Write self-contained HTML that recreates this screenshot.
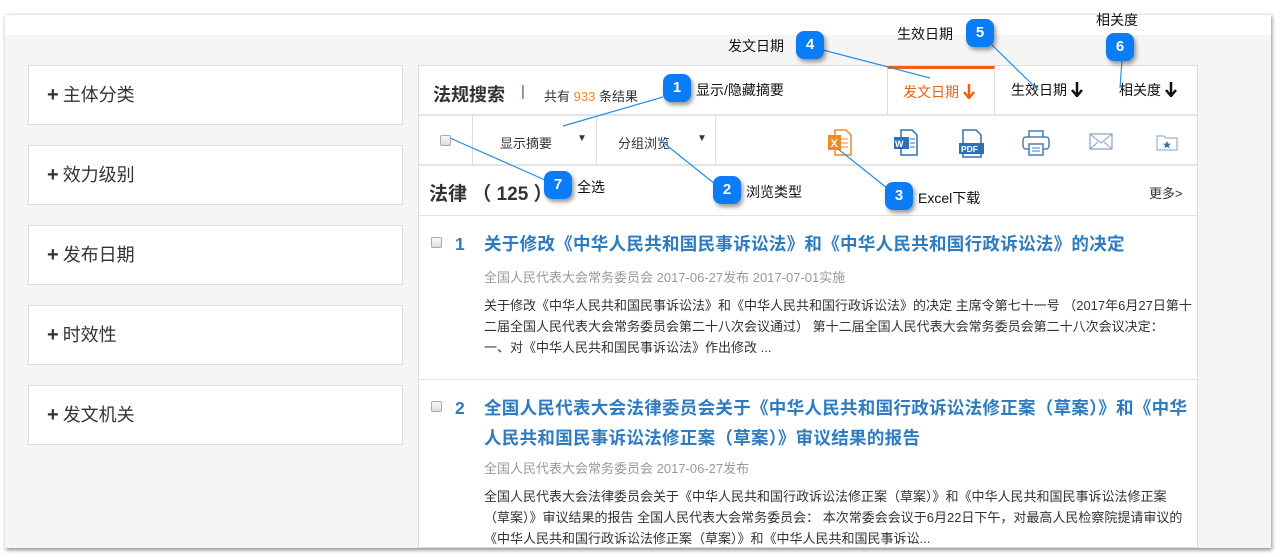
<!DOCTYPE html>
<html><head><meta charset="utf-8"><style>
*{margin:0;padding:0;box-sizing:border-box}
body{width:1280px;height:557px;background:#fff;position:relative;overflow:hidden;font-family:"Liberation Sans","Noto Sans CJK SC",sans-serif;color:#333}
.a{position:absolute}
#frame{left:5px;top:14px;width:1266px;height:534px;background:#f5f5f5;box-shadow:1px 2px 4px rgba(0,0,0,.45);border-top:1px solid #e8e8e8}
#topw{left:5px;top:15px;width:1266px;height:20px;background:#fff}
.lb{left:28px;width:375px;height:60px;background:#fff;border:1px solid #ddd;font-size:18px;line-height:58px;padding-left:18px;color:#333}
.lb b{font-size:20px;margin-right:4px}
#main{left:418px;top:65px;width:780px;height:483px;background:#fff;border:1px solid #ddd;overflow:hidden}
.hl{left:0;width:780px;height:2px;background:#e3e3e3}
.vl{width:1px;background:#ddd}
.badge{width:28px;height:28px;border-radius:8px;background:#0a7cf5;color:#fff;font-weight:bold;font-size:15px;text-align:center;line-height:28px;box-shadow:2px 3px 4px rgba(0,0,0,.4)}
.lab{font-size:14px;color:#111}
.t{color:#2f7bbf;font-weight:bold;font-size:17.5px;line-height:30px;letter-spacing:.3px}
.m{color:#999;font-size:13px}
.d{color:#333;font-size:13px;line-height:21px}
.cb{width:11px;height:11px;border:1px solid #aaa;border-radius:2px;background:linear-gradient(#fafafa,#ddd)}
</style></head><body>
<div class="a" id="frame"></div>
<div class="a" id="topw"></div>

<div class="a lb" style="top:65px"><b>+</b>主体分类</div>
<div class="a lb" style="top:145px"><b>+</b>效力级别</div>
<div class="a lb" style="top:225px"><b>+</b>发布日期</div>
<div class="a lb" style="top:305px"><b>+</b>时效性</div>
<div class="a lb" style="top:385px"><b>+</b>发文机关</div>

<div class="a" id="main">
  <div class="a" style="left:14px;top:15px;font-size:18px;font-weight:bold;color:#333">法规搜索</div>
  <div class="a" style="left:102px;top:17px;font-size:15px;color:#7a3a8a">|</div>
  <div class="a" style="left:125px;top:20px;font-size:13px;color:#333">共有 <span style="color:#f08a24">933</span> 条结果</div>
  <div class="a" style="left:468px;top:0;width:108px;height:49px;border-left:1px solid #ddd;border-right:1px solid #ddd;border-top:3px solid #f0600f;color:#f0600f;font-size:14px;line-height:46px;padding-left:15px">发文日期 <svg width="12" height="16" style="vertical-align:-2px"><path d="M6 1v13M1 9l5 6 5-6" fill="none" stroke="#f0600f" stroke-width="2.5"/></svg></div>
  <div class="a" style="left:592px;top:14px;font-size:14px;color:#111">生效日期 <svg width="12" height="16" style="vertical-align:-2px"><path d="M6 1v13M1 9l5 6 5-6" fill="none" stroke="#111" stroke-width="2.5"/></svg></div>
  <div class="a" style="left:700px;top:14px;font-size:14px;color:#111">相关度 <svg width="12" height="16" style="vertical-align:-2px"><path d="M6 1v13M1 9l5 6 5-6" fill="none" stroke="#111" stroke-width="2.5"/></svg></div>
  <div class="a hl" style="top:48px"></div>
  <div class="a cb" style="left:21px;top:69px"></div>
  <div class="a vl" style="left:53px;top:50px;height:49px"></div>
  <div class="a" style="left:81px;top:67px;font-size:13px">显示摘要</div>
  <div class="a" style="left:158px;top:67px;font-size:10px">▼</div>
  <div class="a vl" style="left:177px;top:50px;height:49px"></div>
  <div class="a" style="left:199px;top:67px;font-size:13px">分组浏览</div>
  <div class="a" style="left:278px;top:67px;font-size:10px">▼</div>
  <div class="a vl" style="left:296px;top:50px;height:49px"></div>
  <svg class="a" style="left:408px;top:63px" width="26" height="28"><path d="M8 1h11l5 5v20H8z" fill="#fff" stroke="#f08a24" stroke-width="1.5"/><path d="M14 10h7M14 14h7M14 18h7" stroke="#f08a24"/><rect x="1" y="6" width="13" height="15" fill="#f08a24"/><text x="3.5" y="18" font-size="11" font-weight="bold" fill="#fff" font-family="Liberation Sans">X</text></svg>
  <svg class="a" style="left:474px;top:63px" width="26" height="28"><path d="M8 1h11l5 5v20H8z" fill="#fff" stroke="#2f6fb3" stroke-width="1.5"/><path d="M17 10h5M17 14h5M17 18h5" stroke="#2f6fb3"/><rect x="1" y="8" width="15" height="12" fill="#2f6fb3"/><text x="2" y="18" font-size="9" font-weight="bold" fill="#fff" font-family="Liberation Sans">W</text></svg>
  <svg class="a" style="left:539px;top:63px" width="28" height="30"><path d="M5 1h13l5 5v22H5z" fill="#fff" stroke="#2f6fb3" stroke-width="1.5"/><rect x="1" y="14" width="25" height="11" fill="#2f6fb3"/><text x="3" y="23" font-size="8.5" font-weight="bold" fill="#fff" font-family="Liberation Sans">PDF</text></svg>
  <svg class="a" style="left:603px;top:64px" width="28" height="27"><rect x="7" y="1" width="14" height="7" fill="#fff" stroke="#4a7fb5" stroke-width="1.5"/><rect x="1" y="7" width="26" height="12" rx="3" fill="#fff" stroke="#4a7fb5" stroke-width="1.5"/><rect x="7" y="14" width="14" height="11" fill="#fff" stroke="#4a7fb5" stroke-width="1.5"/><path d="M10 18h8M10 21h8" stroke="#4a7fb5"/></svg>
  <svg class="a" style="left:670px;top:67px" width="24" height="18"><rect x="1" y="1" width="22" height="15" fill="#fff" stroke="#8aa0c0" stroke-width="1.2"/><path d="M1 1l11 9 11-9M1 16l8-7M23 16l-8-7" fill="none" stroke="#8aa0c0"/></svg>
  <svg class="a" style="left:737px;top:68px" width="22" height="17"><path d="M1 2h7l2 2h11v12H1z" fill="#fff" stroke="#8aa0c0"/><path d="M11 7l1.2 2.6 2.6.2-2 1.8.7 2.6-2.5-1.5-2.5 1.5.7-2.6-2-1.8 2.6-.2z" fill="#2f6fb3"/></svg>
  <div class="a hl" style="top:98px"></div>
  <div class="a" style="left:10px;top:113px;font-size:19px;font-weight:bold;color:#333">法律 （ 125 ）</div>
  <div class="a" style="left:730px;top:117px;font-size:13px">更多&gt;</div>
  <div class="a hl" style="top:149px;height:1px"></div>

  <div class="a cb" style="left:12px;top:171px"></div>
  <div class="a t" style="left:36px;top:163px">1</div>
  <div class="a t" style="left:65px;top:163px">关于修改《中华人民共和国民事诉讼法》和《中华人民共和国行政诉讼法》的决定</div>
  <div class="a m" style="left:65px;top:201px">全国人民代表大会常务委员会 2017-06-27发布 2017-07-01实施</div>
  <div class="a d" style="left:65px;top:229px;width:708px">关于修改《中华人民共和国民事诉讼法》和《中华人民共和国行政诉讼法》的决定 主席令第七十一号 （2017年6月27日第十二届全国人民代表大会常务委员会第二十八次会议通过） 第十二届全国人民代表大会常务委员会第二十八次会议决定： 一、对《中华人民共和国民事诉讼法》作出修改 ...</div>
  <div class="a hl" style="top:313px;height:1px"></div>

  <div class="a cb" style="left:12px;top:335px"></div>
  <div class="a t" style="left:36px;top:327px">2</div>
  <div class="a t" style="left:65px;top:327px;width:708px">全国人民代表大会法律委员会关于《中华人民共和国行政诉讼法修正案（草案）》和《中华人民共和国民事诉讼法修正案（草案）》审议结果的报告</div>
  <div class="a m" style="left:65px;top:392px">全国人民代表大会常务委员会 2017-06-27发布</div>
  <div class="a d" style="left:65px;top:420px;width:708px">全国人民代表大会法律委员会关于《中华人民共和国行政诉讼法修正案（草案）》和《中华人民共和国民事诉讼法修正案（草案）》审议结果的报告 全国人民代表大会常务委员会： 本次常委会会议于6月22日下午，对最高人民检察院提请审议的《中华人民共和国行政诉讼法修正案（草案）》和《中华人民共和国民事诉讼...</div>
</div>

<svg class="a" style="left:0;top:0" width="1280" height="557">
<g stroke="#2a8de0" stroke-width="1.2" fill="none">
<path d="M663 97L563 126"/><path d="M823 50L930 78"/><path d="M992 45L1038 90"/><path d="M1122 60L1120 88"/><path d="M545 180L450 138"/><path d="M715 184L660 140"/><path d="M887 188L838 149"/>
</g></svg>

<div class="a badge" style="left:663px;top:74px">1</div><div class="a lab" style="left:696px;top:80px">显示/隐藏摘要</div>
<div class="a badge" style="left:796px;top:31px">4</div><div class="a lab" style="left:728px;top:36px">发文日期</div>
<div class="a badge" style="left:966px;top:19px">5</div><div class="a lab" style="left:897px;top:24px">生效日期</div>
<div class="a badge" style="left:1106px;top:33px">6</div><div class="a lab" style="left:1096px;top:10px">相关度</div>
<div class="a badge" style="left:544px;top:171px">7</div><div class="a lab" style="left:577px;top:177px">全选</div>
<div class="a badge" style="left:713px;top:176px">2</div><div class="a lab" style="left:746px;top:182px">浏览类型</div>
<div class="a badge" style="left:885px;top:182px">3</div><div class="a lab" style="left:918px;top:188px">Excel下载</div>
</body></html>
